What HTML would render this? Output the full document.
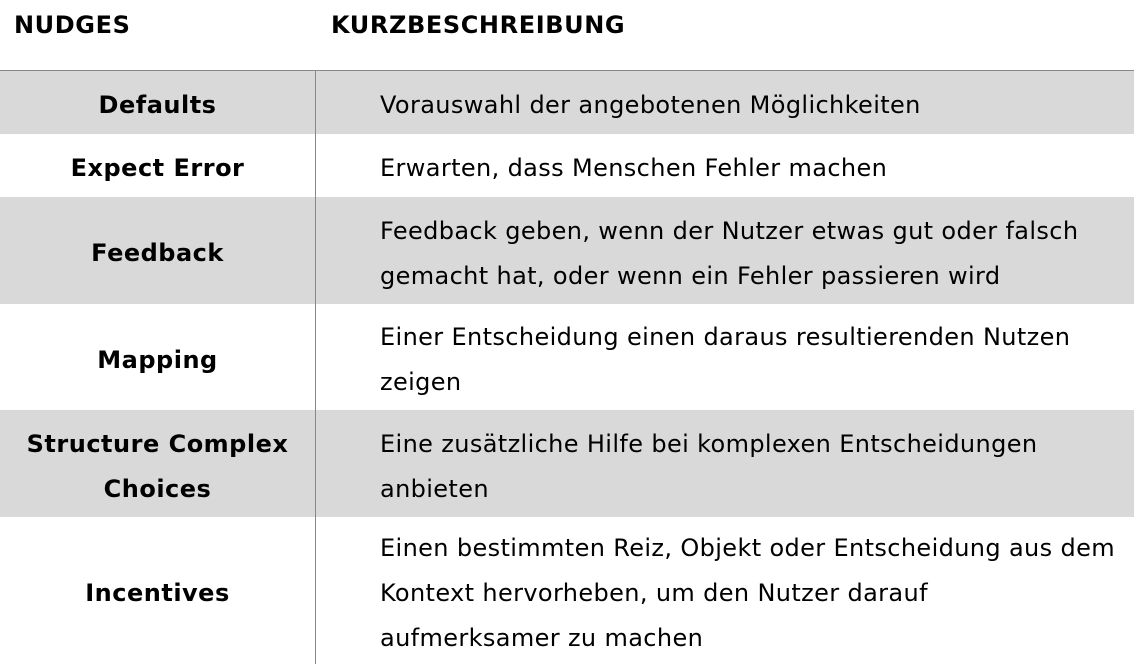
<!DOCTYPE html>
<html><head><meta charset="utf-8"><style>
body{margin:0;width:1134px;height:664px;background:#fff;position:relative;overflow:hidden;font-family:"DejaVu Sans","Liberation Sans",sans-serif;font-size:24px;letter-spacing:0.37px;color:#000}
.h{position:absolute;top:11px;font-weight:bold;font-size:24px;letter-spacing:0.6px}
.hl{position:absolute;left:0;top:70px;width:1134px;height:1px;background:#888}
.vl{position:absolute;left:315px;top:71px;width:1px;height:593px;background:#888}
.row{position:absolute;left:0;width:1134px;display:flex;align-items:center}
.g{background:#d9d9d9}
.in{position:relative;top:3px;display:flex;align-items:center;width:100%}
.l{width:315px;text-align:center;font-weight:bold;line-height:45px;letter-spacing:0.5px}
.r{position:absolute;left:380px;line-height:45px;white-space:nowrap}
</style></head><body>
<div class="h" style="left:14px">NUDGES</div>
<div class="h" style="left:331px">KURZBESCHREIBUNG</div>
<div class="hl"></div>
<div class="row g" style="top:71px;height:63px"><div class="in"><div class="l">Defaults</div><div class="r">Vorauswahl der angebotenen Möglichkeiten</div></div></div>
<div class="row" style="top:134px;height:63px"><div class="in"><div class="l">Expect Error</div><div class="r">Erwarten, dass Menschen Fehler machen</div></div></div>
<div class="row g" style="top:197px;height:107px"><div class="in"><div class="l">Feedback</div><div class="r">Feedback geben, wenn der Nutzer etwas gut oder falsch<br>gemacht hat, oder wenn ein Fehler passieren wird</div></div></div>
<div class="row" style="top:304px;height:106px"><div class="in"><div class="l">Mapping</div><div class="r">Einer Entscheidung einen daraus resultierenden Nutzen<br>zeigen</div></div></div>
<div class="row g" style="top:410px;height:107px"><div class="in"><div class="l">Structure Complex<br>Choices</div><div class="r">Eine zusätzliche Hilfe bei komplexen Entscheidungen<br>anbieten</div></div></div>
<div class="row" style="top:517px;height:147px"><div class="in"><div class="l">Incentives</div><div class="r">Einen bestimmten Reiz, Objekt oder Entscheidung aus dem<br>Kontext hervorheben, um den Nutzer darauf<br>aufmerksamer zu machen</div></div></div>
<div class="vl"></div>
</body></html>
